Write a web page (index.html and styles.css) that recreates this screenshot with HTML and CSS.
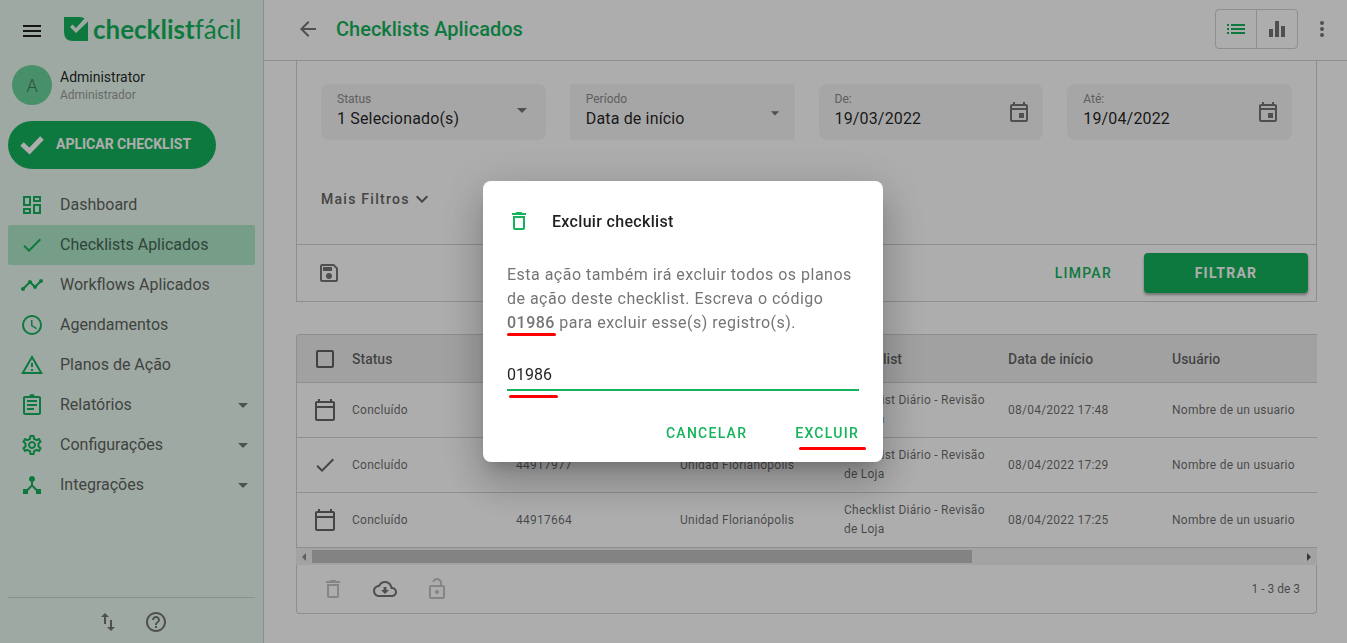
FILE: index.html
```html
<!DOCTYPE html>
<html lang="pt-BR">
<head>
<meta charset="utf-8">
<title>Checklists Aplicados</title>
<link rel="stylesheet" href="styles.css">
</head>
<body>
<svg class="sprite" aria-hidden="true">
  <symbol id="menu" viewBox="0 0 24 24"><path d="M3 18h18v-2H3v2zm0-5h18v-2H3v2zm0-7v2h18V6H3z"/></symbol>
  <symbol id="dashboard" viewBox="0 0 24 24"><path d="M19 5v2h-4V5h4M9 5v6H5V5h4m10 8v6h-4v-6h4M9 17v2H5v-2h4M21 3h-8v6h8V3zM11 3H3v10h8V3zm10 8h-8v10h8V11zm-10 4H3v6h8v-6z"/></symbol>
  <symbol id="check" viewBox="0 0 24 24"><path d="M9 16.17L4.83 12l-1.42 1.41L9 19 21 7l-1.41-1.41z"/></symbol>
  <symbol id="timeline" viewBox="0 0 24 24"><path d="M23 8c0 1.100-.9 2-2 2-.18 0-.35-.02-.51-.07l-3.560 3.550c.05.16.07.34.07.52 0 1.100-.9 2-2 2s-2-.9-2-2c0-.18.02-.36.07-.52l-2.550-2.550c-.16.05-.34.07-.52.07s-.36-.02-.52-.07l-4.550 4.560c.05.16.07.33.07.51 0 1.100-.9 2-2 2s-2-.9-2-2 .9-2 2-2c.18 0 .35.02.51.07l4.560-4.550C8.020 9.360 8 9.180 8 9c0-1.100.9-2 2-2s2 .9 2 2c0 .18-.02.36-.07.52l2.550 2.550c.16-.05.34-.07.52-.07s.36.02.52.07l3.550-3.560C19.020 8.350 19 8.180 19 8c0-1.100.9-2 2-2s2 .9 2 2z"/></symbol>
  <symbol id="clock" viewBox="0 0 24 24"><path d="M12 2a10 10 0 1 0 0 20 10 10 0 0 0 0-20zm0 18a8 8 0 1 1 0-16 8 8 0 0 1 0 16zm.5-13H11v6l5.250 3.150.75-1.230-4.500-2.670z"/></symbol>
  <symbol id="warning" viewBox="0 0 24 24"><path d="M12 5.990L19.530 19H4.470L12 5.990M12 2L1 21h22L12 2zm1 14h-2v2h2v-2zm0-6h-2v4h2v-4z"/></symbol>
  <symbol id="clipboard" viewBox="0 0 24 24"><path fill-rule="evenodd" d="M7 15h7v2H7zm0-4h10v2H7zm0-4h10v2H7zM19 3h-4.180C14.400 1.840 13.300 1 12 1s-2.400.84-2.820 2H5c-1.100 0-2 .9-2 2v15c0 1.100.9 2 2 2h14c1.100 0 2-.9 2-2V5c0-1.100-.9-2-2-2zm0 17H5V5h14z"/></symbol>
  <symbol id="gear" viewBox="0 0 24 24"><path d="M19.43 12.98c.04-.32.07-.64.07-.98 0-.34-.03-.66-.07-.98l2.11-1.65c.19-.15.24-.42.12-.64l-2-3.46c-.09-.16-.26-.25-.44-.25-.06 0-.12.01-.17.03l-2.49 1c-.52-.4-1.08-.73-1.69-.98l-.38-2.65C14.46 2.18 14.25 2 14 2h-4c-.25 0-.46.18-.49.42l-.38 2.65c-.61.25-1.17.59-1.69.98l-2.49-1c-.06-.02-.12-.03-.18-.03-.17 0-.34.09-.43.25l-2 3.46c-.13.22-.07.49.12.64l2.11 1.65c-.04.32-.07.65-.07.98 0 .33.03.66.07.98l-2.11 1.65c-.19.15-.24.42-.12.64l2 3.46c.09.16.26.25.44.25.06 0 .12-.01.17-.03l2.49-1c.52.4 1.08.73 1.69.98l.38 2.65c.03.24.24.42.49.42h4c.25 0 .46-.18.49-.42l.38-2.65c.61-.25 1.17-.59 1.69-.98l2.49 1c.06.02.12.03.18.03.17 0 .34-.09.43-.25l2-3.46c.12-.22.07-.49-.12-.64l-2.11-1.65zm-1.98-1.71c.04.31.05.52.05.73 0 .21-.02.43-.05.73l-.14 1.13.89.7 1.08.84-.7 1.21-1.27-.51-1.04-.42-.9.68c-.43.32-.84.56-1.25.73l-1.06.43-.16 1.13-.2 1.35h-1.4l-.19-1.35-.16-1.13-1.06-.43c-.43-.18-.83-.41-1.23-.71l-.91-.7-1.06.43-1.27.51-.7-1.21 1.08-.84.89-.7-.14-1.13c-.03-.31-.05-.54-.05-.74s.02-.43.05-.73l.14-1.13-.89-.7-1.08-.84.7-1.21 1.27.51 1.04.42.9-.68c.43-.32.84-.56 1.25-.73l1.06-.43.16-1.13.2-1.35h1.39l.19 1.35.16 1.13 1.06.43c.43.18.83.41 1.23.71l.91.7 1.06-.43 1.27-.51.7 1.21-1.07.85-.89.7.14 1.13zM12 8c-2.21 0-4 1.79-4 4s1.79 4 4 4 4-1.790 4-4-1.790-4-4-4zm0 6c-1.100 0-2-.9-2-2s.9-2 2-2 2 .9 2 2-.9 2-2 2z"/></symbol>
  <symbol id="hub" viewBox="0 0 24 24"><path d="M17 16l-4-4V8.820C14.160 8.400 15 7.300 15 6c0-1.660-1.340-3-3-3S9 4.340 9 6c0 1.300.84 2.400 2 2.820V12l-4 4H3v5h5v-3.050l4-4.200 4 4.200V21h5v-5h-4z"/></symbol>
  <symbol id="swap" viewBox="0 0 24 24"><path d="M9 3L5 7h3v7h2V7h3L9 3zm7 14v-7h-2v7h-3l4 4 4-4h-3z"/></symbol>
  <symbol id="help" viewBox="0 0 24 24"><path d="M11 18h2v-2h-2v2zm1-16C6.480 2 2 6.480 2 12s4.480 10 10 10 10-4.480 10-10S17.520 2 12 2zm0 18c-4.410 0-8-3.590-8-8s3.590-8 8-8 8 3.590 8 8-3.590 8-8 8zm0-14c-2.210 0-4 1.790-4 4h2c0-1.100.9-2 2-2s2 .9 2 2c0 2-3 1.750-3 5h2c0-2.250 3-2.500 3-5 0-2.210-1.790-4-4-4z"/></symbol>
  <symbol id="back" viewBox="0 0 24 24"><path d="M20 11H7.830l5.590-5.590L12 4l-8 8 8 8 1.410-1.410L7.830 13H20v-2z"/></symbol>
  <symbol id="list" viewBox="0 0 24 24"><path d="M3 13h2v-2H3v2zm0 4h2v-2H3v2zm0-8h2V7H3v2zm4 4h14v-2H7v2zm0 4h14v-2H7v2zM7 7v2h14V7H7z"/></symbol>
  <symbol id="bars" viewBox="0 0 24 24"><path d="M4 12h4v8H4zM10 4h4v16h-4zM16 9h4v11h-4z"/></symbol>
  <symbol id="more" viewBox="0 0 24 24"><circle cx="12" cy="6" r="2"/><circle cx="12" cy="12" r="2"/><circle cx="12" cy="18" r="2"/></symbol>
  <symbol id="drop" viewBox="0 0 24 24"><path d="M7 10l5 5 5-5z"/></symbol>
  <symbol id="expand" viewBox="0 0 24 24"><path d="M16.590 8.590L12 13.170 7.410 8.590 6 10l6 6 6-6z"/></symbol>
  <symbol id="event" viewBox="0 0 24 24"><path d="M19 4h-1V2h-2v2H8V2H6v2H5c-1.100 0-2 .9-2 2v14c0 1.100.9 2 2 2h14c1.100 0 2-.9 2-2V6c0-1.100-.9-2-2-2zm0 16H5V10h14v10zm0-12H5V6h14v2zm-7 5h5v5h-5z"/></symbol>
  <symbol id="calendar" viewBox="0 0 24 24"><path d="M20 3h-1V1h-2v2H7V1H5v2H4c-1.100 0-2 .9-2 2v16c0 1.100.9 2 2 2h16c1.100 0 2-.9 2-2V5c0-1.100-.9-2-2-2zm0 18H4V10h16v11zm0-13H4V5h16z"/></symbol>
  <symbol id="save" viewBox="0 0 24 24"><path fill-rule="evenodd" d="M5 3h12l4 4v12a2 2 0 0 1-2 2H5a2 2 0 0 1-2-2V5a2 2 0 0 1 2-2zm0 2v14h14V7.800L16.200 5zM6 6h9v4H6zm6 6a3 3 0 1 1 0 6 3 3 0 0 1 0-6z"/></symbol>
  <symbol id="trash" viewBox="0 0 24 24"><path d="M6 19c0 1.100.9 2 2 2h8c1.100 0 2-.9 2-2V7H6v12zM8 9h8v10H8V9zm7.500-5l-1-1h-5l-1 1H5v2h14V4z"/></symbol>
  <symbol id="cloud" viewBox="0 0 24 24"><path d="M19.350 10.040C18.670 6.590 15.640 4 12 4 9.110 4 6.600 5.640 5.350 8.040 2.340 8.360 0 10.910 0 14c0 3.310 2.690 6 6 6h13c2.760 0 5-2.240 5-5 0-2.640-2.050-4.780-4.650-4.960zM19 18H6c-2.210 0-4-1.790-4-4 0-2.050 1.530-3.760 3.560-3.970l1.070-.11.5-.95C8.080 7.140 9.940 6 12 6c2.620 0 4.880 1.860 5.390 4.430l.3 1.500 1.530.11c1.560.1 2.780 1.410 2.780 2.960 0 1.650-1.350 3-3 3zM13.450 10h-2.900v3H8l4 4 4-4h-2.550z"/></symbol>
  <symbol id="unlock" viewBox="0 0 24 24"><path d="M12 17c1.100 0 2-.9 2-2s-.9-2-2-2-2 .9-2 2 .9 2 2 2zm6-9h-1V6c0-2.760-2.240-5-5-5-2.280 0-4.270 1.540-4.840 3.750l1.940.5C9.440 3.930 10.630 3 12 3c1.650 0 3 1.350 3 3v2H6c-1.100 0-2 .9-2 2v10c0 1.100.9 2 2 2h12c1.100 0 2-.9 2-2V10c0-1.100-.9-2-2-2zm0 12H6V10h12v10z"/></symbol>
  <symbol id="left" viewBox="0 0 16 16"><path d="M10 4v8L6 8z"/></symbol>
  <symbol id="right" viewBox="0 0 16 16"><path d="M6 4v8l4-4z"/></symbol>
</svg>

<div class="app">
  <aside class="sidebar">
    <div class="brand">
      <button class="icon-button menu-button" aria-label="Menu"><svg class="icon"><use href="#menu"/></svg></button>
      <a class="logo" href="#" aria-label="checklistfácil">
        <svg class="logo-mark" viewBox="0 0 24 24"><path class="logo-shape" d="M0 0h16q3 0 4.500 1.500L12 11 8.500 7.500 6 10l6 6L24 4.500V24H9q-9 0-9-9z"/></svg>
        <span class="logo-bold">checklist</span><span class="logo-light">fácil</span>
      </a>
    </div>
    <div class="user">
      <span class="avatar">A</span>
      <div class="user-text">
        <span class="user-name">Administrator</span>
        <span class="user-role">Administrador</span>
      </div>
    </div>
    <button class="apply-button">
      <svg class="apply-tick" viewBox="0 0 24 24"><path d="M2 12l7.500 7L22 6"/></svg>
      <span>APLICAR CHECKLIST</span>
    </button>
    <nav class="nav">
      <a class="nav-item" href="#"><svg class="icon"><use href="#dashboard"/></svg><span class="nav-label">Dashboard</span></a>
      <a class="nav-item nav-active" href="#"><svg class="icon"><use href="#check"/></svg><span class="nav-label">Checklists Aplicados</span></a>
      <a class="nav-item" href="#"><svg class="icon"><use href="#timeline"/></svg><span class="nav-label">Workflows Aplicados</span></a>
      <a class="nav-item" href="#"><svg class="icon"><use href="#clock"/></svg><span class="nav-label">Agendamentos</span></a>
      <a class="nav-item" href="#"><svg class="icon"><use href="#warning"/></svg><span class="nav-label">Planos de Ação</span></a>
      <a class="nav-item" href="#"><svg class="icon"><use href="#clipboard"/></svg><span class="nav-label">Relatórios</span><svg class="icon caret"><use href="#drop"/></svg></a>
      <a class="nav-item" href="#"><svg class="icon"><use href="#gear"/></svg><span class="nav-label">Configurações</span><svg class="icon caret"><use href="#drop"/></svg></a>
      <a class="nav-item" href="#"><svg class="icon"><use href="#hub"/></svg><span class="nav-label">Integrações</span><svg class="icon caret"><use href="#drop"/></svg></a>
    </nav>
    <div class="sidebar-footer">
      <button class="icon-button" aria-label="Alternar"><svg class="icon"><use href="#swap"/></svg></button>
      <button class="icon-button" aria-label="Ajuda"><svg class="icon"><use href="#help"/></svg></button>
    </div>
  </aside>

  <div class="page">
    <header class="topbar">
      <button class="icon-button" aria-label="Voltar"><svg class="icon"><use href="#back"/></svg></button>
      <h1 class="title">Checklists Aplicados</h1>
      <div class="view-toggle">
        <button class="toggle toggle-on" aria-label="Lista"><svg class="icon"><use href="#list"/></svg></button>
        <button class="toggle" aria-label="Gráficos"><svg class="icon"><use href="#bars"/></svg></button>
      </div>
      <button class="icon-button" aria-label="Mais opções"><svg class="icon"><use href="#more"/></svg></button>
    </header>

    <main class="content">
      <section class="filters">
        <div class="filter-body">
          <div class="filter-grid">
            <div class="field">
              <label class="field-label" for="status">Status</label>
              <select class="field-control" id="status"><option>1 Selecionado(s)</option></select>
              <svg class="icon field-icon field-caret"><use href="#drop"/></svg>
            </div>
            <div class="field field-square">
              <label class="field-label" for="periodo">Período</label>
              <select class="field-control" id="periodo"><option>Data de início</option></select>
              <svg class="icon field-icon field-caret-small"><use href="#drop"/></svg>
            </div>
            <div class="field">
              <label class="field-label" for="de">De:</label>
              <input class="field-control" id="de" type="text" value="19/03/2022">
              <svg class="icon field-icon"><use href="#event"/></svg>
            </div>
            <div class="field">
              <label class="field-label" for="ate">Até:</label>
              <input class="field-control" id="ate" type="text" value="19/04/2022">
              <svg class="icon field-icon"><use href="#event"/></svg>
            </div>
          </div>
          <button class="more-filters">Mais Filtros <svg class="icon"><use href="#expand"/></svg></button>
        </div>
        <div class="filter-footer">
          <button class="icon-button save" aria-label="Salvar filtro"><svg class="icon"><use href="#save"/></svg></button>
          <button class="text-button">LIMPAR</button>
          <button class="filter-button">FILTRAR</button>
        </div>
      </section>

      <section class="results">
        <div class="table-scroll">
          <table class="table">
            <thead>
              <tr>
                <th class="mark"><input class="checkbox" type="checkbox" aria-label="Selecionar todos"></th>
                <th>Status</th><th>Código</th><th>Unidade</th><th>Checklist</th><th>Data de início</th><th>Usuário</th>
              </tr>
            </thead>
            <tbody>
              <tr>
                <td class="mark"><svg class="icon"><use href="#calendar"/></svg></td>
                <td>Concluído</td><td>44918112</td><td>Unidad Florianópolis</td><td>Checklist Diário - Revisão de Loja</td><td>08/04/2022 17:48</td><td>Nombre de un usuario</td>
              </tr>
              <tr>
                <td class="mark"><svg class="icon"><use href="#check"/></svg></td>
                <td>Concluído</td><td>44917977</td><td>Unidad Florianópolis</td><td>Checklist Diário - Revisão de Loja</td><td>08/04/2022 17:29</td><td>Nombre de un usuario</td>
              </tr>
              <tr>
                <td class="mark"><svg class="icon"><use href="#calendar"/></svg></td>
                <td>Concluído</td><td>44917664</td><td>Unidad Florianópolis</td><td>Checklist Diário - Revisão de Loja</td><td>08/04/2022 17:25</td><td>Nombre de un usuario</td>
              </tr>
            </tbody>
          </table>
        </div>
        <div class="scrollbar">
          <svg class="scroll-arrow scroll-arrow-off"><use href="#left"/></svg>
          <div class="scroll-track"><div class="scroll-thumb"></div></div>
          <svg class="scroll-arrow"><use href="#right"/></svg>
        </div>
        <div class="results-footer">
          <button class="icon-button" disabled aria-label="Excluir"><svg class="icon"><use href="#trash"/></svg></button>
          <button class="icon-button" aria-label="Baixar"><svg class="icon"><use href="#cloud"/></svg></button>
          <button class="icon-button" disabled aria-label="Desbloquear"><svg class="icon"><use href="#unlock"/></svg></button>
          <span class="count">1 - 3 de 3</span>
        </div>
      </section>
    </main>
  </div>
</div>

<div class="scrim">
  <div class="dialog" role="dialog" aria-labelledby="dialog-title">
    <div class="dialog-head">
      <svg class="icon"><use href="#trash"/></svg>
      <h2 class="dialog-title" id="dialog-title">Excluir checklist</h2>
    </div>
    <label class="dialog-text" for="code">Esta ação também irá excluir todos os planos de ação deste checklist. Escreva o código <span class="marked"><strong class="code">01986</strong><i class="underline"></i></span> para excluir esse(s) registro(s).</label>
    <div class="code-field marked">
      <input class="code-input" id="code" type="text" value="01986">
      <i class="underline underline-input"></i>
    </div>
    <div class="dialog-actions">
      <button class="text-button">CANCELAR</button>
      <button class="text-button marked">EXCLUIR<i class="underline underline-action"></i></button>
    </div>
  </div>
</div>
</body>
</html>
```
FILE: styles.css
```css
:root {
  --green: #16b35c;
  --line: #d2d2d2;
  --text: rgba(0, 0, 0, .87);
  --muted: rgba(0, 0, 0, .6);
}

* { box-sizing: border-box; }

body {
  margin: 0;
  background: #fff;
  color: var(--text);
  font-family: Roboto, "Liberation Sans", sans-serif;
  font-size: 14px;
}

button, input, select { font: inherit; color: inherit; margin: 0; }
button { border: 0; background: none; padding: 0; cursor: pointer; }
a { color: inherit; text-decoration: none; }

.sprite { display: none; }
.icon { display: block; width: 24px; height: 24px; flex: none; fill: currentColor; }
.icon-button { display: flex; align-items: center; justify-content: center; color: #757575; }
.icon-button:disabled { color: #c4c4c4; }

.app { display: flex; height: 100vh; overflow: hidden; }

/* Sidebar */
.sidebar {
  display: flex;
  flex-direction: column;
  flex: none;
  width: 264px;
  padding: 0 8px;
  border-right: 1px solid var(--line);
  background: #ebfaf1;
}
.brand { display: flex; align-items: center; gap: 20px; height: 61px; padding-left: 12px; }
.menu-button { color: var(--text); }
.logo {
  display: flex; align-items: center; margin-bottom: 3px;
  color: var(--green); font-family: Lato, sans-serif; font-size: 26px; line-height: 32px;
}
.logo-mark { width: 24px; height: 24px; margin-right: 5px; }
.logo-shape { fill: var(--green); }
.logo-bold { font-weight: 700; }
.logo-light { font-weight: 400; }
.user { display: flex; align-items: center; gap: 8px; height: 48px; padding-left: 4px; }
.avatar {
  display: flex; align-items: center; justify-content: center;
  width: 40px; height: 40px; border-radius: 50%;
  background: #6bd49d; color: #457a5f; font-size: 18px; font-weight: 300;
}
.user-text { display: flex; flex-direction: column; padding-top: 2px; line-height: 18px; }
.user-name { font-size: 14px; }
.user-role { font-size: 12px; color: #979d99; }
.apply-button {
  display: flex; align-items: center; gap: 12px;
  width: 208px; height: 48px; margin-top: 12px; padding: 0 0 2px 12px;
  border-radius: 24px; background: var(--green); color: #fff; font-weight: 700;
}
.apply-tick { width: 24px; height: 24px; fill: none; stroke: #fff; stroke-width: 5; }
.nav { display: flex; flex-direction: column; margin-top: 16px; }
.nav-item {
  display: flex; align-items: center; gap: 16px; height: 40px; padding: 0 0 0 12px;
  border-radius: 2px; color: #5e6460; font-size: 16px;
}
.nav-label { padding-bottom: 2px; }
.nav-item .icon { color: var(--green); }
.nav-item .caret { margin-left: auto; color: #747a76; }
.nav-active { background: #afe8c9; color: #466555; }
.sidebar-footer {
  display: flex; justify-content: center; gap: 24px;
  margin-top: auto; padding: 12px 0 9px; border-top: 1px solid var(--line);
}

/* Top bar */
.page { display: flex; flex-direction: column; flex: 1; min-width: 0; }
.topbar {
  display: flex; align-items: center; height: 61px; flex: none;
  padding: 0 13px 3px 32px; border-bottom: 1px solid var(--line);
}
.title { margin: 0 auto 0 16px; color: var(--green); font-size: 20px; font-weight: 500; }
.view-toggle { display: flex; margin-right: 12px; border: 1px solid var(--line); border-radius: 4px; }
.toggle { display: flex; align-items: center; justify-content: center; width: 40px; height: 38px; color: #757575; }
.toggle-on { width: 41px; border-right: 1px solid var(--line); color: var(--green); }

/* Filters */
.content { padding: 0 30px 0 32px; }
.filters { border: 1px solid var(--line); border-top: 0; }
.filter-body { padding: 23px 24px 33px; }
.filter-grid { display: grid; grid-template-columns: repeat(4, 1fr); gap: 24px; }
.field { position: relative; height: 56px; border-radius: 8px; background: #f5f5f5; }
.field-square { border-radius: 4px; }
.field-label { position: absolute; top: 8px; left: 16px; color: #8c8c8c; font-size: 12px; line-height: 14px; }
.field-control {
  display: block; width: 100%; height: 56px; padding: 12px 48px 0 16px;
  border: 0; border-radius: inherit; background: none; appearance: none; outline: 0;
  font-size: 16px; letter-spacing: .01em;
}
.field-icon { position: absolute; top: 16px; right: 12px; color: #757575; pointer-events: none; }
.field-caret { top: 14px; }
.field-caret-small { top: 19px; right: 10px; width: 20px; height: 20px; }
.more-filters { display: flex; align-items: center; margin-top: 47px; color: #666; font-weight: 500; letter-spacing: .09em; }
.filter-footer { display: flex; align-items: center; height: 57px; padding: 0 8px 0 20px; border-top: 1px solid var(--line); }
.save { margin-right: auto; }
.text-button { height: 36px; padding: 0 8px; color: var(--green); font-weight: 500; letter-spacing: .09em; }
.filter-button {
  width: 164px; height: 40px; margin-left: 24px; border-radius: 4px;
  background: var(--green); color: #fff; font-weight: 700; letter-spacing: .09em;
  box-shadow: 0 2px 3px rgba(0, 0, 0, .35);
}

/* Results */
.results { margin-top: 32px; }
.table-scroll {
  overflow: hidden; border: 1px solid var(--line); border-width: 1px 0 0 1px;
  border-top-left-radius: 4px;
}
.table { width: 100%; min-width: 1023px; table-layout: fixed; border-collapse: separate; border-spacing: 0; }
.table th, .table td { padding: 0 0 0 16px; border-bottom: 1px solid var(--line); text-align: left; vertical-align: middle; }
.table th { height: 48px; background: #eee; color: var(--muted); font-size: 14px; font-weight: 500; }
.table td { height: 55px; color: var(--muted); font-size: 12px; line-height: 19px; letter-spacing: .02em; }
.table .mark { width: 39px; }
.checkbox { display: block; width: 18px; height: 18px; margin-left: 3px; border: 2px solid #616161; border-radius: 2px; appearance: none; }
.scrollbar { display: flex; align-items: center; height: 17px; background: #f1f1f1; }
.scroll-arrow { width: 16px; height: 16px; flex: none; fill: #505050; }
.scroll-arrow-off { fill: #8a8a8a; }
.scroll-track { flex: 1; }
.scroll-thumb { width: 66.7%; height: 13px; background: #c1c1c1; }
.results-footer {
  display: flex; align-items: center; gap: 28px; height: 49px; padding: 0 16px 0 24px;
  border: 1px solid var(--line); border-top: 0; border-radius: 0 0 4px 4px;
}
.count { margin-left: auto; color: var(--muted); font-size: 12px; }

/* Dialog */
.scrim {
  position: fixed; inset: 0; display: flex; align-items: center; justify-content: center;
  padding-left: 19px; background: rgba(0, 0, 0, .32);
}
.dialog {
  display: flex; flex-direction: column;
  width: 400px; padding: 20px 24px 11px; border-radius: 8px; background: #fff;
  box-shadow: 0 11px 15px -7px rgba(0, 0, 0, .2), 0 24px 38px 3px rgba(0, 0, 0, .14), 0 9px 46px 8px rgba(0, 0, 0, .12);
}
.dialog-head { display: flex; align-items: center; gap: 21px; height: 40px; color: var(--green); }
.dialog-title { margin: 0; color: var(--text); font-size: 16px; font-weight: 500; letter-spacing: .02em; }
.dialog-text { margin-top: 22px; color: #757575; font-size: 16px; line-height: 24px; letter-spacing: .03em; }
.code { font-weight: 500; }
.code-field { margin-top: 23px; }
.code-input {
  display: block; width: 100%; height: 33px; padding: 2px 0 0; border: 0;
  border-bottom: 2px solid var(--green); outline: 0; font-size: 16px;
}
.dialog-actions { display: flex; justify-content: flex-end; gap: 32px; margin: 24px -8px 0 0; }
.marked { position: relative; }
.underline { position: absolute; left: 0; bottom: -4px; width: 49px; height: 3px; border-radius: 2px; background: #f00; }
.underline-input { left: 2px; bottom: -7px; }
.underline-action { left: 12px; bottom: 1px; width: 67px; }
```
